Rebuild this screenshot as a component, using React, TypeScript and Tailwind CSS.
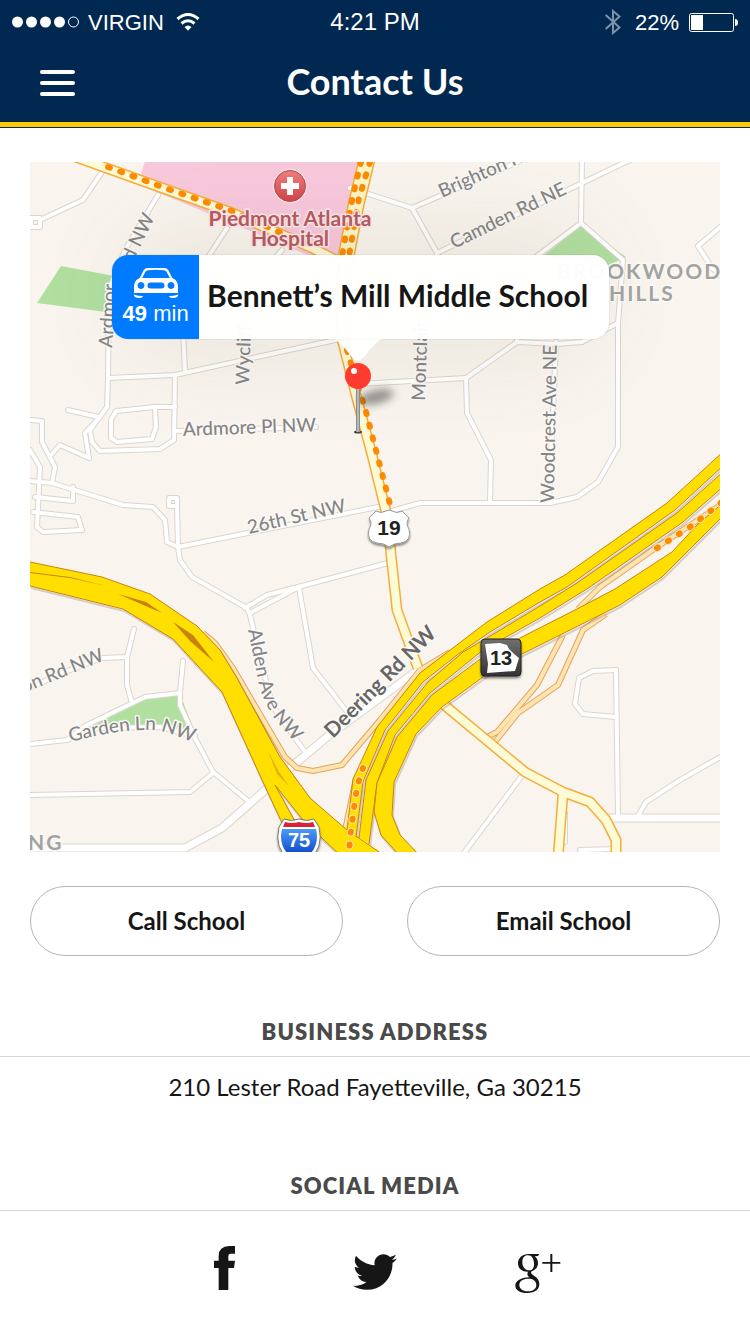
import { FaTwitter } from "react-icons/fa";

const streets: string[] = [
  "M102 158V172L83 200L42 219",
  "M31 218h9v9h-9z",
  "M158 195L125 250L109 290L108 378L107 407L90 430L92 442L100 451L160 449L174 440L175 375",
  "M108 378L175 375L257 357L340 339",
  "M183 330L185 372",
  "M227 228L205 262",
  "M282 250L275 258",
  "M68 410L98 417",
  "M175 407L155 407L116 411L111 420V438L117 442L152 439L156 427L155 407",
  "M100 417L85 433L89 458L60 445L51 455",
  "M30 420L42 421V442L55 467L52 483",
  "M30 450L40 467L37 527L43 532L82 530L78 517L33 512",
  "M30 481L52 483L123 505L153 507L165 520L167 542L178 547",
  "M35 497L73 501V487",
  "M169 498h8v8h-8z",
  "M176 431L316 427",
  "M177 506L178 547L180 560L192 577L247 608L250 615L257 645L272 705L305 752",
  "M178 547L388 505",
  "M245 608L267 595L298 587L388 563",
  "M250 613L297 588",
  "M299 588L313 668L348 713",
  "M134 629L127 657V685L132 703",
  "M30 688L62 673L102 658L127 657",
  "M30 744L67 740L85 726L145 697L180 693",
  "M67 740L95 728L160 727L195 736",
  "M183 661L180 693V705L195 738L213 772L247 800",
  "M30 795L190 792L213 773",
  "M350 188L412 208L437 253L440 275",
  "M412 208L527 158",
  "M437 253L582 183L632 159",
  "M582 158L581 223L623 260L618 323V447L598 482L577 497L550 503H420L388 512",
  "M581 223L537 256",
  "M618 323L582 342L557 344L517 342L466 378L467 413L491 460L490 503",
  "M358 384L466 378",
  "M517 342V325",
  "M724 224L698 246L712 268L724 278",
  "M556 342L549 503",
  "M616 670L593 671L579 678L575 704L583 714L616 717",
  "M616 670L618 815",
  "M638 816L646 802L680 780L724 755",
  "M521 777L461 857",
  "M565 813V842",
  "M580 850L615 849",
];

const avenues: string[] = [
  "M28 848H185L222 828L263 792L290 768L327 737L418 670",
  "M610 818H724",
];

const arterials: string[] = [
  "M70 155L165 189L230 212L310 247L340 262",
  "M365 155L354 205L344 262L341 335L356 395L372 455L388 520L391 555L397 610L418 668",
  "M443 704L525 772L563 792L590 802L606 820L616 840V858",
  "M563 793L558 858",
];

const ramps: string[] = [
  "M563 635L537 685L497 732L487 737",
  "M606 614L583 630L558 685L518 713L495 742",
  "M722 504L657 547L600 587L578 609",
  "M203 633L215 643L233 668L285 757L297 768L313 771L342 765L380 720L420 670L450 652",
  "M356 778L345 830",
];

const transit: string[] = [
  "M108 167L165 188L232 211L310 246",
  "M361 162L353 195L342 256",
  "M370 162L359 198L349 256",
  "M347 350L357 384L365 408L391 508",
  "M657 548L690 527L722 502",
  "M363 768L357 787L354 808L350 838L349 854",
];

const highways: string[] = [
  "M30 562L102 577L150 594L197 626L220 650L237 678L280 757L310 798L347 830L369 845L388 858H343L303 820L275 785L297 825L283 825L263 782L222 692L173 639L123 609L30 586",
  "M347 830L353 779L377 727L420 673L487 622L540 589L565 575L667 503L724 451V465L675 510L567 587L540 602L490 632L457 655L423 682L385 730L363 782L356 837",
  "M359 838L366 780L388 731L428 682L463 652L497 632L540 606L577 583L677 513L724 471V486L683 522L590 587L540 618L483 650L430 693L395 735L377 783L369 844",
  "M400 856L381 835L374 812L377 783L397 737L432 695L483 657L520 638L575 610L615 589L672 552L697 525L724 502V515L662 577L620 605L570 630L520 655L483 677L442 707L416 734L394 782L392 815L400 835L420 856",
];

function MapLabels() {
  return (
    <g
      fill="#858585"
      stroke="#fbf9f5"
      strokeWidth="3"
      strokeLinejoin="round"
      paintOrder="stroke"
      fontFamily="Lato, 'Liberation Sans', sans-serif"
      fontSize="19"
      fontWeight="500"
    >
      <text transform="translate(133 262) rotate(-64)">d NW</text>
      <text transform="translate(112 348) rotate(-86)">Ardmor</text>
      <text transform="translate(249 385) rotate(-88)">Wycliff</text>
      <text transform="translate(425 401) rotate(-88)">Montclair</text>
      <text transform="translate(554 503) rotate(-89)">Woodcrest Ave NE</text>
      <text transform="translate(183 436) rotate(-2)">Ardmore Pl NW</text>
      <text transform="translate(249 534) rotate(-13)">26th St NW</text>
      <text transform="translate(442 198) rotate(-24)">Brighton Rd</text>
      <text transform="translate(454 249) rotate(-26)">Camden Rd NE</text>
      <text transform="translate(24 693) rotate(-22)">on Rd NW</text>
      <path id="garden" d="M70 742Q140 724 168 733L206 747" fill="none" stroke="none" />
      <path id="alden" d="M248 630L258 680Q264 706 278 723L310 760" fill="none" stroke="none" />
      <text>
        <textPath href="#garden">Garden Ln NW</textPath>
      </text>
      <text>
        <textPath href="#alden">Alden Ave NW</textPath>
      </text>
      <text
        transform="translate(333 739) rotate(-45)"
        fontSize="21"
        fontWeight="700"
        fill="#666"
      >
        Deering Rd NW
      </text>
      <g fill="#a3a3a3" fontSize="21" fontWeight="700" letterSpacing="2">
        <text x="557" y="279">BROOKWOOD</text>
        <text x="609" y="301">HILLS</text>
        <text x="28" y="850">NG</text>
      </g>
      <g
        fill="#b85a5f"
        stroke="#fce8ee"
        fontSize="21"
        fontWeight="700"
        textAnchor="middle"
      >
        <text x="290" y="226">Piedmont Atlanta</text>
        <text x="290" y="246">Hospital</text>
      </g>
    </g>
  );
}

function SchoolMap() {
  return (
    <svg
      viewBox="30 162 690 690"
      className="block w-full"
      role="img"
      aria-label="Map of the area around the school"
    >
      <defs>
        <filter id="soft" x="-50%" y="-50%" width="200%" height="200%">
          <feGaussianBlur stdDeviation="4" />
        </filter>
        <filter id="glow" x="-50%" y="-100%" width="200%" height="300%">
          <feGaussianBlur stdDeviation="45" />
        </filter>
        <filter id="drop" x="-30%" y="-30%" width="160%" height="160%">
          <feDropShadow dx="0" dy="2" stdDeviation="1" floodOpacity="0.45" />
        </filter>
        <linearGradient id="interstate" x1="0" y1="0" x2="0" y2="1">
          <stop offset="0" stopColor="#4a9bf5" />
          <stop offset="1" stopColor="#0a3fc4" />
        </linearGradient>
        <linearGradient id="badge" x1="0" y1="0" x2="0" y2="1">
          <stop offset="0" stopColor="#f08080" />
          <stop offset="1" stopColor="#d04348" />
        </linearGradient>
        <linearGradient id="plate" x1="0" y1="0" x2="0" y2="1">
          <stop offset="0" stopColor="#707070" />
          <stop offset="1" stopColor="#333333" />
        </linearGradient>
        <linearGradient id="needle" x1="0" y1="0" x2="1" y2="0">
          <stop offset="0" stopColor="#777" />
          <stop offset="0.5" stopColor="#ccc" />
          <stop offset="1" stopColor="#777" />
        </linearGradient>
      </defs>

      <rect x="30" y="162" width="690" height="690" fill="#f9f5ee" />
      <path d="M146 158H362L340 258L310 256L138 184Z" fill="#f8c8dc" />
      <g fill="#b0dfa0">
        <path d="M61 266L125 278L106 312L37 303Z" />
        <path d="M581 226L626 257L607 266L543 256Z" />
        <path d="M85 728L145 697L180 694L194 730L130 726Z" />
      </g>

      <g fill="none" strokeLinejoin="round" strokeLinecap="round">
        {streets.map((d) => (
          <path key={d} d={d} stroke="#dcd5cb" strokeWidth="6" />
        ))}
        {avenues.map((d) => (
          <path key={d} d={d} stroke="#dcd5cb" strokeWidth="9" />
        ))}
        {streets.map((d) => (
          <path key={d} d={d} stroke="#ffffff" strokeWidth="4" />
        ))}
        {avenues.map((d) => (
          <path key={d} d={d} stroke="#ffffff" strokeWidth="7" />
        ))}
      </g>
      <g fill="none" strokeLinejoin="round">
        {ramps.map((d) => (
          <path key={d} d={d} stroke="#dfa367" strokeWidth="6" />
        ))}
        {ramps.map((d) => (
          <path key={d} d={d} stroke="#ffe5ad" strokeWidth="4" />
        ))}
        {arterials.map((d) => (
          <path key={d} d={d} stroke="#f5ad3a" strokeWidth="11" />
        ))}
        {arterials.map((d) => (
          <path key={d} d={d} stroke="#fdfad6" strokeWidth="8" />
        ))}
        <path d="M368 155L356 205L345 262" stroke="#f5ad3a" strokeWidth="17" />
        <path d="M368 155L356 205L345 262" stroke="#fdf6c4" strokeWidth="14" />
      </g>

      <g fill="none" stroke="#8f8878" strokeOpacity="0.35" strokeWidth="2">
        {highways.map((d) => (
          <path key={d} d={d} transform="translate(1 2)" />
        ))}
      </g>
      <g fill="#ffdf00" stroke="#c98212" strokeWidth="1" strokeLinejoin="round">
        {highways.map((d) => (
          <path key={d} d={d} />
        ))}
      </g>
      <g fill="#c98212">
        <path d="M30 572L70 577L106 586L70 578L30 573Z" />
        <path d="M118 594L146 602L162 613L141 604Z" />
        <path d="M173 622L193 635L214 662L190 641Z" />
        <path d="M268 751L279 772L289 786L277 774Z" fillOpacity="0.5" />
      </g>
      <g fill="none" stroke="#ff8a00" strokeWidth="6" strokeLinecap="round">
        {transit.slice(0, 4).map((d) => (
          <path key={d} d={d} strokeDasharray="2 11" />
        ))}
        {transit.slice(4).map((d) => (
          <g key={d} strokeDasharray="1 12">
            <path d={d} stroke="#ffe5ad" strokeWidth="8" />
            <path d={d} />
          </g>
        ))}
      </g>

      <MapLabels />

      <circle cx="290" cy="186" r="17" fill="#fce8ee" />
      <circle cx="290" cy="186" r="15.500" fill="url(#badge)" stroke="#b9474c" />
      <path d="M287 177h6v6h6v6h-6v6h-6v-6h-6v-6h6z" fill="#fff" />

      <g fontFamily="'Liberation Sans', sans-serif" fontWeight="700" textAnchor="middle">
        <g filter="url(#drop)">
          <path
            d="M376 511Q381 514 386 511L389 510L392 511Q397 514 402 511L409 518Q405 523 409 529Q412 541 401 543Q394 543 389 547Q384 543 377 543Q366 541 369 529Q373 523 369 518Z"
            fill="#fff"
            stroke="#999"
            strokeWidth="1"
          />
        </g>
        <text x="389" y="535" fontSize="21" fill="#222">19</text>
        <g filter="url(#drop)">
          <rect x="481" y="639" width="40" height="37" rx="4" fill="url(#plate)" stroke="#222" />
        </g>
        <path
          d="M485 644L500 643L507 645L509 649Q515 655 519 658L515 671L487 673L488 664Z"
          fill="#fff"
        />
        <text x="501" y="665" fontSize="20" fill="#222">13</text>
        <g filter="url(#drop)">
          <path
            d="M284 819Q291 822 299 819Q307 822 314 819L319 827Q324 848 309 860H289Q274 848 279 827Z"
            fill="#fff"
            stroke="#777"
            strokeWidth="1"
          />
        </g>
        <path d="M285 822Q292 824 299 822Q306 824 313 822L315 827H283Z" fill="#dc2136" />
        <path d="M282 829H316Q320 846 307 857H291Q278 846 282 829Z" fill="url(#interstate)" />
        <text x="299" y="847" fontSize="20" fill="#fff">75</text>
      </g>

      <rect x="120" y="225" width="480" height="135" rx="60" fill="#5c4a34" opacity="0.09" filter="url(#glow)" />
      <path
        d="M328 338C340 339 345 349 352 357Q358 364 364 357C371 349 376 339 388 338Z"
        fill="#fff"
        fillOpacity="0.97"
      />
      <ellipse cx="376" cy="397" rx="18" ry="7" transform="rotate(-14 376 397)" fill="#333" opacity="0.5" filter="url(#soft)" />
      <ellipse cx="358" cy="432" rx="4" ry="1.500" fill="#444" />
      <rect x="356" y="386" width="4" height="46" fill="url(#needle)" />
      <circle cx="358" cy="376" r="13" fill="#ff3b30" />
      <circle cx="354" cy="371" r="3" fill="#fff" />
    </svg>
  );
}

function CarIcon() {
  return (
    <svg viewBox="0 0 44 30" className="h-[30px] w-11" fill="none" aria-hidden="true">
      <path
        d="M6 12L10 4Q11 1.500 14 1.200Q22 0.300 30 1.200Q33 1.500 34 4L38 12"
        stroke="#fff"
        strokeWidth="2.200"
      />
      <path
        fillRule="evenodd"
        d="M6 10H38Q44 12 44 19V25H0V19Q0 12 6 10ZM7 14a3.500 3.500 0 1 0 0.010 0ZM37 14a3.500 3.500 0 1 0 0.010 0ZM16.500 14.500a3 3 0 0 0 0 6H27.500a3 3 0 0 0 0-6Z"
        fill="#fff"
      />
      <path d="M0 26.500Q4 28 9 28L8 29.500Q2 31 0 28ZM44 26.500Q40 28 35 28L36 29.500Q42 31 44 28Z" fill="#fff" />
    </svg>
  );
}

function StatusBar() {
  return (
    <div className="grid h-11 grid-cols-3 items-center px-3 font-['Liberation_Sans',sans-serif] text-[22px] text-white">
      <div className="flex items-center gap-2">
        <svg viewBox="0 0 68 12" className="h-3 w-[68px]" fill="#fff" aria-hidden="true">
          <circle cx="5.500" cy="6" r="5.500" />
          <circle cx="19.500" cy="6" r="5.500" />
          <circle cx="33.500" cy="6" r="5.500" />
          <circle cx="47.500" cy="6" r="5.500" />
          <circle cx="61.500" cy="6" r="5" fill="none" stroke="#fff" />
        </svg>
        <span>VIRGIN</span>
        <svg viewBox="0 0 24 18" className="ml-1 h-[18px] w-6" fill="none" stroke="#fff" strokeWidth="3" aria-hidden="true">
          <path d="M1.500 6Q12 -3 22.500 6" />
          <path d="M5.500 10.500Q12 5 18.500 10.500" />
          <path d="M8.500 14Q12 11 15.500 14L12 17.800Z" fill="#fff" stroke="none" />
        </svg>
      </div>
      <div className="text-center text-2xl">4:21 PM</div>
      <div className="flex items-center justify-end gap-2.5">
        <svg viewBox="0 0 16 26" className="mr-1 h-[26px] w-4" fill="none" stroke="#7f93a8" strokeWidth="2" aria-hidden="true">
          <path d="M0.700 6L14.500 18.500L8 24V2L14.500 7.500L0.700 20" />
        </svg>
        <span>22%</span>
        <svg viewBox="0 0 49 19" className="h-[19px] w-[49px]" aria-hidden="true">
          <rect x="0.500" y="0.500" width="44" height="18" rx="2" fill="none" stroke="#fff" />
          <rect x="2" y="2" width="12" height="15" fill="#fff" />
          <path d="M46 6Q49 6 49 9.500Q49 13 46 13Z" fill="#fff" />
        </svg>
      </div>
    </div>
  );
}

function SectionTitle({ children }: { children: string }) {
  return (
    <h2 className="border-b border-[#d5d5d5] pb-2 text-center text-[22px] leading-8 font-extrabold tracking-wider text-[#4a4a4a]">
      {children}
    </h2>
  );
}

export default function App() {
  return (
    <div className="min-h-screen bg-white font-[Lato,'Liberation_Sans',sans-serif] text-[#161616]">
      <header className="border-b border-[#002850] bg-[#002850]">
        <StatusBar />
        <div className="grid h-[83px] grid-cols-[75px_1fr_75px] items-center border-b-5 border-[#ffcb00]">
          <button type="button" aria-label="Menu" className="flex flex-col gap-[7px] pl-10">
            <span className="h-1 w-full rounded-xs bg-white" />
            <span className="h-1 w-full rounded-xs bg-white" />
            <span className="h-1 w-full rounded-xs bg-white" />
          </button>
          <h1 className="pb-1 text-center text-4xl font-bold text-white">Contact Us</h1>
        </div>
      </header>

      <main>
        <section className="px-[30px] pt-[34px]">
          <div className="relative">
            <SchoolMap />
            <div className="absolute top-[13.5%] left-[11.9%] flex h-[84px] w-[72%] overflow-hidden rounded-2xl bg-white/97 shadow-[0_0_1px_rgba(0,0,0,0.4)]">
              <div className="flex w-[87px] shrink-0 flex-col items-center justify-center bg-[#007aff] pt-1 font-['Liberation_Sans',sans-serif] text-[22px] leading-8 text-white">
                <CarIcon />
                <p>
                  <b>49</b> min
                </p>
              </div>
              <p className="pt-5 pl-2 text-[30px] leading-10 font-bold whitespace-nowrap">
                Bennett’s Mill Middle School
              </p>
            </div>
          </div>
          <div className="mt-[34px] grid grid-cols-2 gap-16">
            <button type="button" className="h-[70px] rounded-full border border-[#b5b5b5] text-2xl font-bold">
              Call School
            </button>
            <button type="button" className="h-[70px] rounded-full border border-[#b5b5b5] text-2xl font-bold">
              Email School
            </button>
          </div>
        </section>

        <section className="pt-[60px]">
          <SectionTitle>BUSINESS ADDRESS</SectionTitle>
          <p className="pt-[14px] text-center text-2xl leading-8">210 Lester Road Fayetteville, Ga 30215</p>
        </section>

        <section className="pt-[67px]">
          <SectionTitle>SOCIAL MEDIA</SectionTitle>
          <nav className="flex items-center justify-center gap-[118px] pt-[35px] pb-8 pl-6" aria-label="Social media">
            <a href="#facebook" aria-label="Facebook">
              <svg viewBox="102 78 63 144" className="h-12 w-[21px]" fill="currentColor">
                <path d="M165 78H148Q116 80 116 107V122H102V144H116V210H145V144H162L165 122H145V108Q145 101 152 101H165Z" />
              </svg>
            </a>
            <a href="#twitter" aria-label="Twitter">
              <FaTwitter className="mt-1 size-11" />
            </a>
            <a href="#google-plus" aria-label="Google Plus">
              <svg viewBox="1004 78 138 144" className="h-12 w-[46px]" fill="currentColor">
                <path
                  fillRule="evenodd"
                  d="M1077 102H1045C1027 102 1013 113 1013 130C1013 146 1025 156 1043 155C1039 163 1042 168 1048 172C1018 173 1005 184 1005 197C1005 210 1019 219 1041 219C1064 219 1077 208 1077 192C1077 179 1069 173 1061 167C1053 161 1050 158 1054 154C1066 150 1073 141 1073 130C1073 120 1069 113 1063 109L1073 108ZM1043 106C1054 106 1061 116 1061 132C1061 144 1056 151 1047 151C1034 151 1026 141 1026 126C1026 114 1032 106 1043 106ZM1048 176C1060 177 1068 184 1068 195C1068 207 1057 214 1042 214C1027 214 1017 206 1017 195C1017 182 1029 175 1048 176Z"
                />
                <path d="M1110 102h6v24h24v5h-24v25h-6v-25h-24v-5h24z" />
              </svg>
            </a>
          </nav>
        </section>
      </main>
    </div>
  );
}
